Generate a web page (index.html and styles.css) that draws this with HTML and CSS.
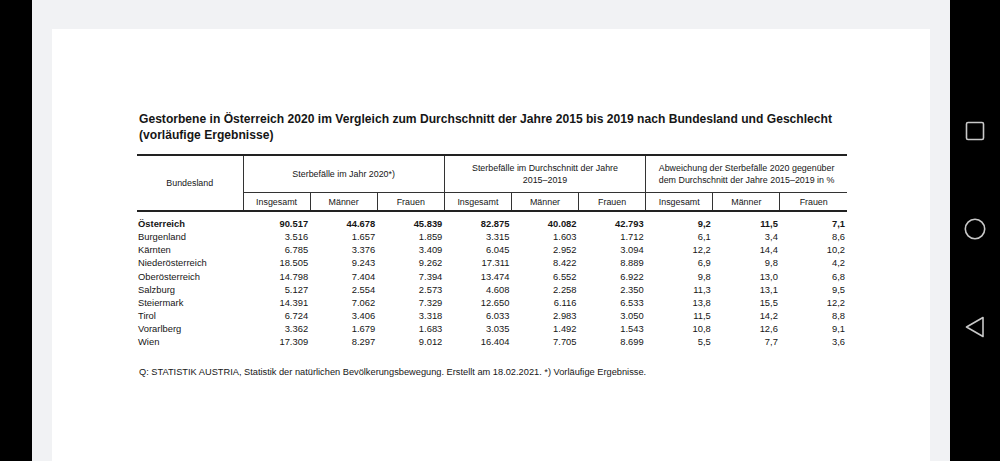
FILE: index.html
```html
<!DOCTYPE html>
<html lang="de">
<head>
<meta charset="utf-8">
<title>Gestorbene in Österreich 2020</title>
<link rel="stylesheet" href="styles.css">
</head>
<body>
<div class="screen">
  <div class="edge-left"></div>
  <div class="viewer">
    <div class="page">
      <h1 class="title">Gestorbene in Österreich 2020 im Vergleich zum Durchschnitt der Jahre 2015 bis 2019 nach Bundesland und Geschlecht<br>(vorläufige Ergebnisse)</h1>
      <table class="stats">
        <colgroup>
          <col class="c-land">
          <col><col><col><col><col><col><col><col><col>
        </colgroup>
        <thead>
          <tr class="head-top">
            <th rowspan="2" class="h-land">Bundesland</th>
            <th colspan="3" class="h-group">Sterbefälle im Jahr 2020*)</th>
            <th colspan="3" class="h-group">Sterbefälle im Durchschnitt der Jahre<br>2015–2019</th>
            <th colspan="3" class="h-group">Abweichung der Sterbefälle 2020 gegenüber<br>dem Durchschnitt der Jahre 2015–2019 in %</th>
          </tr>
          <tr class="head-sub">
            <th class="h-sub h-first">Insgesamt</th><th class="h-sub">Männer</th><th class="h-sub">Frauen</th>
            <th class="h-sub h-first">Insgesamt</th><th class="h-sub">Männer</th><th class="h-sub">Frauen</th>
            <th class="h-sub h-first">Insgesamt</th><th class="h-sub">Männer</th><th class="h-sub">Frauen</th>
          </tr>
        </thead>
        <tbody>
          <tr class="total"><td>Österreich</td><td>90.517</td><td>44.678</td><td>45.839</td><td>82.875</td><td>40.082</td><td>42.793</td><td>9,2</td><td>11,5</td><td>7,1</td></tr>
          <tr><td>Burgenland</td><td>3.516</td><td>1.657</td><td>1.859</td><td>3.315</td><td>1.603</td><td>1.712</td><td>6,1</td><td>3,4</td><td>8,6</td></tr>
          <tr><td>Kärnten</td><td>6.785</td><td>3.376</td><td>3.409</td><td>6.045</td><td>2.952</td><td>3.094</td><td>12,2</td><td>14,4</td><td>10,2</td></tr>
          <tr><td>Niederösterreich</td><td>18.505</td><td>9.243</td><td>9.262</td><td>17.311</td><td>8.422</td><td>8.889</td><td>6,9</td><td>9,8</td><td>4,2</td></tr>
          <tr><td>Oberösterreich</td><td>14.798</td><td>7.404</td><td>7.394</td><td>13.474</td><td>6.552</td><td>6.922</td><td>9,8</td><td>13,0</td><td>6,8</td></tr>
          <tr><td>Salzburg</td><td>5.127</td><td>2.554</td><td>2.573</td><td>4.608</td><td>2.258</td><td>2.350</td><td>11,3</td><td>13,1</td><td>9,5</td></tr>
          <tr><td>Steiermark</td><td>14.391</td><td>7.062</td><td>7.329</td><td>12.650</td><td>6.116</td><td>6.533</td><td>13,8</td><td>15,5</td><td>12,2</td></tr>
          <tr><td>Tirol</td><td>6.724</td><td>3.406</td><td>3.318</td><td>6.033</td><td>2.983</td><td>3.050</td><td>11,5</td><td>14,2</td><td>8,8</td></tr>
          <tr><td>Vorarlberg</td><td>3.362</td><td>1.679</td><td>1.683</td><td>3.035</td><td>1.492</td><td>1.543</td><td>10,8</td><td>12,6</td><td>9,1</td></tr>
          <tr><td>Wien</td><td>17.309</td><td>8.297</td><td>9.012</td><td>16.404</td><td>7.705</td><td>8.699</td><td>5,5</td><td>7,7</td><td>3,6</td></tr>
        </tbody>
      </table>
      <p class="source">Q: STATISTIK AUSTRIA, Statistik der natürlichen Bevölkerungsbewegung. Erstellt am 18.02.2021. *) Vorläufige Ergebnisse.</p>
    </div>
  </div>
  <nav class="navbar">
    <div class="nav-slot">
      <svg width="20" height="20" viewBox="0 0 20 20"><rect x="1.5" y="1.5" width="17" height="17" rx="1.5" fill="none" stroke="#c8c8c8" stroke-width="1.6"/></svg>
    </div>
    <div class="nav-slot">
      <svg width="22" height="22" viewBox="0 0 22 22"><circle cx="11" cy="11" r="9.7" fill="none" stroke="#c8c8c8" stroke-width="1.6"/></svg>
    </div>
    <div class="nav-slot">
      <svg width="20" height="22" viewBox="0 0 20 22"><path d="M18 1.5 L1.5 11 L18 20.5 Z" fill="none" stroke="#c8c8c8" stroke-width="1.6" stroke-linejoin="round"/></svg>
    </div>
  </nav>
</div>
</body>
</html>
```
FILE: styles.css
```css
html, body {
  margin: 0;
  padding: 0;
  background: #000;
}

.screen {
  display: flex;
  width: 1000px;
  height: 461px;
  overflow: hidden;
}

.edge-left {
  width: 32px;
  flex: none;
  background: #000;
}

.viewer {
  width: 918px;
  flex: none;
  box-sizing: border-box;
  background: #f1f2f4;
  padding: 29px 20px 0 20px;
}

.page {
  background: #fff;
  height: 100%;
  box-sizing: border-box;
  padding: 82px 0 0 85px;
  font-family: "Liberation Sans", Arial, sans-serif;
  color: #161616;
}

.title {
  margin: 0;
  font-size: 12.1px;
  line-height: 16px;
  font-weight: bold;
  padding-left: 2px;
}

.stats {
  margin-top: 11px;
  width: 710px;
  table-layout: fixed;
  border-collapse: collapse;
  font-size: 9.4px;
}

.c-land {
  width: 106px;
}

.stats th {
  font-weight: normal;
  font-size: 8.9px;
  line-height: 12px;
  padding: 0;
  text-align: center;
  vertical-align: middle;
}

.head-top th {
  border-top: 2px solid #222;
  height: 36px;
}

.h-group {
  border-left: 1px solid #333;
  border-bottom: 1px solid #333;
}

.h-land {
  border-bottom: 2px solid #222;
}

.h-sub {
  height: 17px;
  border-left: 1px solid #333;
  border-bottom: 2px solid #222;
}

.stats td {
  padding: 0 2px 0 0;
  line-height: 13.15px;
  text-align: right;
  white-space: nowrap;
}

.stats td:first-child {
  text-align: left;
  padding-left: 1px;
}

.stats tbody tr:first-child td {
  padding-top: 5px;
}

.total td {
  font-weight: bold;
}

.source {
  margin: 17px 0 0 2px;
  font-size: 9.25px;
  line-height: 12px;
}

.navbar {
  width: 50px;
  flex: none;
  background: #000;
  display: flex;
  flex-direction: column;
  align-items: center;
  padding-top: 82px;
}

.nav-slot {
  height: 98px;
  display: flex;
  align-items: center;
  justify-content: center;
}

.nav-slot svg {
  display: block;
}
```
